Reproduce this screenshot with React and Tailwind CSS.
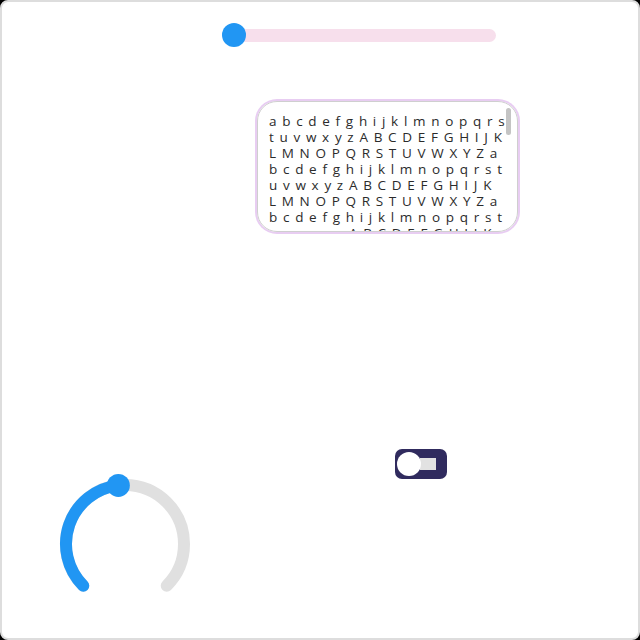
import React from 'react';

const LINES = [
  'abcdefghijklmnopqrs',
  'tuvwxyzABCDEFGHIJK',
  'LMNOPQRSTUVWXYZa',
  'bcdefghijklmnopqrst',
  'uvwxyzABCDEFGHIJK',
  'LMNOPQRSTUVWXYZa',
  'bcdefghijklmnopqrst',
  'uvwxyzABCDEFGHIJK',
];

// knob geometry (svg is 150x150, centre 75,75)
const R = 59;
const point = (deg) => {
  const a = (deg * Math.PI) / 180;
  return [75 + R * Math.sin(a), 75 - R * Math.cos(a)];
};

const Knob = ({ value }) => {
  const [sx, sy] = point(225);
  const [ex, ey] = point(135);
  const angle = 225 + 270 * value;
  const [vx, vy] = point(angle);
  const large = 270 * value > 180 ? 1 : 0;
  return (
    <svg width="150" height="150" viewBox="0 0 150 150" className="block">
      <path
        d={`M ${sx} ${sy} A ${R} ${R} 0 1 1 ${ex} ${ey}`}
        fill="none"
        stroke="#e0e0e0"
        strokeWidth="12"
        strokeLinecap="round"
      />
      <path
        d={`M ${sx} ${sy} A ${R} ${R} 0 ${large} 1 ${vx} ${vy}`}
        fill="none"
        stroke="#2196f3"
        strokeWidth="12"
        strokeLinecap="round"
      />
      <circle cx={vx} cy={vy} r="11.5" fill="#2196f3" />
    </svg>
  );
};

export default function App() {
  return (
    <div className="w-[640px] h-[640px] bg-black">
      <div className="h-full rounded-lg border-2 border-[#dddddd] bg-white flex flex-col">
        {/* slider */}
        <div className="relative mt-[21px] ml-[220px] w-[274px] h-[24px] flex items-center">
          <div className="ml-[12px] flex-1 h-[13px] rounded-full bg-[#f7dfec]" />
          <div className="absolute left-0 top-0 w-[24px] h-[24px] rounded-full bg-[#2196f3]" />
        </div>

        {/* textarea */}
        <div className="relative mt-[54px] ml-[255px] w-[261px] h-[131px] rounded-[20px] border border-[#cfcfcf] shadow-[0_0_0_2px_#e8cdf2] overflow-hidden">
          <div
            className="pl-[11px] pt-[11px] text-[13.5px] leading-[16px] text-[#2b2b2b] tracking-[1.1px] whitespace-pre"
            style={{ fontFamily: '"Open Sans", "DejaVu Sans", sans-serif' }}
          >
            {LINES.map((l, i) => (
              <div key={i} className="h-[16px]">{l.split('').join(' ')}</div>
            ))}
          </div>
          <div className="absolute right-[6px] top-[6px] w-[5px] h-[27px] rounded-sm bg-[#c4c4c4]" />
        </div>

        {/* bottom row: knob + toggle */}
        <div className="mt-[217px] flex items-start">
          <div className="mt-[20px] ml-[48px]">
            <Knob value={0.476} />
          </div>
          <div className="ml-[195px] w-[52px] h-[30px] rounded-[7px] bg-[#302b5e] flex items-center relative">
            <div className="ml-[25px] w-[16px] h-[12px] bg-[#e2e2e2]" />
            <div className="absolute left-[2px] top-[3px] w-[24px] h-[24px] rounded-full bg-white" />
          </div>
        </div>
      </div>
    </div>
  );
}
